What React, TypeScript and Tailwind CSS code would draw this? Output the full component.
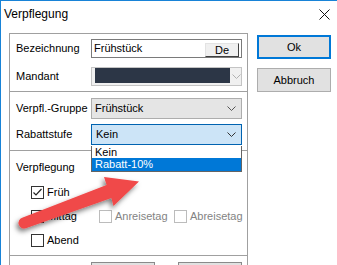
import React from 'react';

const Chevron = ({ color = '#555' }: { color?: string }) => (
  <svg width="9" height="5" viewBox="0 0 9 5" className="shrink-0">
    <path d="M0.5 0.5 L4.5 4.5 L8.5 0.5" fill="none" stroke={color} strokeWidth="1" />
  </svg>
);

function Checkbox({ label, checked = false, disabled = false }: { label: string; checked?: boolean; disabled?: boolean }) {
  return (
    <div className="flex items-center h-[13px] gap-[3px]">
      <div
        className={`w-[13px] h-[13px] shrink-0 bg-white border ${disabled ? 'border-[#bcbcbc]' : 'border-[#333333]'} flex items-center justify-center`}
      >
        {checked && (
          <svg width="11" height="11" viewBox="0 0 11 11">
            <path d="M1.5 5.5 L4 8 L9.5 2" fill="none" stroke="#222" strokeWidth="1.2" />
          </svg>
        )}
      </div>
      <span className={`leading-none ${disabled ? 'text-[#838383]' : 'text-black'}`}>{label}</span>
    </div>
  );
}

export default function App() {
  return (
    <div className="relative w-[337px] h-[265px] overflow-hidden bg-white border-l border-t border-[#1883d7] text-[11px] text-black font-[Liberation_Sans,Arial,sans-serif]">
      {/* Title bar */}
      <div className="h-[26px] flex items-center justify-between pl-[3px] pr-[7px]">
        <span className="text-[12px]">Verpflegung</span>
        <svg width="11" height="11" viewBox="0 0 11 11">
          <path d="M0.5 0.5 L10.5 10.5 M10.5 0.5 L0.5 10.5" stroke="#111" strokeWidth="1" />
        </svg>
      </div>

      <div className="flex pt-[6px]">
        {/* Left group column */}
        <div className="ml-[8px] w-[239px] border-x border-[#a0a0a0] flex flex-col">
          {/* Bezeichnung / Mandant */}
          <div className="h-[58px] border-t border-[#a0a0a0] pt-[5px]">
            <div className="flex items-center h-[19px]">
              <span className="w-[81px] pl-[6px]">Bezeichnung</span>
              <div className="w-[151px] h-[19px] border border-[#7a7a7a] bg-white flex items-end justify-between">
                <span className="pl-[2px] self-center">Frühstück</span>
                <div className="w-[34px] h-[14px] mr-[2px] bg-[#f0f0f0] border-t border-l border-[#e3e3e3] border-r border-b border-r-[#404040] border-b-[#404040] flex items-center justify-center">
                  De
                </div>
              </div>
            </div>
            <div className="flex items-center h-[19px] mt-[9px]">
              <span className="w-[81px] pl-[6px]">Mandant</span>
              <div className="w-[151px] h-[19px] border border-[#c4c4c4] bg-[#f0f0f0] flex items-start">
                <div className="ml-[3px] w-[137px] h-[15px] bg-[#2c3646]" />
                <div className="ml-[2px] self-center opacity-40">
                  <Chevron />
                </div>
              </div>
            </div>
          </div>

          {/* Verpfl.-Gruppe / Rabattstufe */}
          <div className="h-[59px] border-t border-[#a0a0a0] pt-[6px]">
            <div className="flex items-center h-[21px]">
              <span className="w-[81px] pl-[6px]">Verpfl.-Gruppe</span>
              <div className="w-[151px] h-[21px] border border-[#adadad] bg-[#e5e5e5] flex items-center justify-between pl-[3px] pr-[5px]">
                <span>Frühstück</span>
                <Chevron />
              </div>
            </div>
            <div className="flex items-center h-[21px] mt-[5px]">
              <span className="w-[81px] pl-[6px]">Rabattstufe</span>
              <div className="w-[151px] h-[21px] border border-[#0063b1] bg-[#cce4f7] flex items-center justify-between pl-[4px] pr-[5px]">
                <span>Kein</span>
                <Chevron color="#333" />
              </div>
            </div>
          </div>

          {/* Verpflegung */}
          <div className="h-[105px] border-t border-[#a0a0a0] pt-[8px]">
            <div className="h-[16px] flex items-center pl-[6px]">Verpflegung</div>
            <div className="flex flex-col gap-[11px] mt-[11px] pl-[21px]">
              <Checkbox label="Früh" checked />
              <div className="flex">
                <div className="w-[68px]">
                  <Checkbox label="Mittag" />
                </div>
                <div className="w-[75px]">
                  <Checkbox label="Anreisetag" disabled />
                </div>
                <Checkbox label="Abreisetag" disabled />
              </div>
              <Checkbox label="Abend" />
            </div>
          </div>

          {/* Bottom buttons */}
          <div className="h-[20px] border-t border-[#a0a0a0] pt-[6px] flex">
            <div className="ml-[81px] w-[64px] h-[22px] border border-[#8a8a8a] bg-[#e1e1e1]" />
            <div className="ml-[23px] w-[64px] h-[22px] border border-[#8a8a8a] bg-[#e1e1e1]" />
          </div>
        </div>

        {/* Right buttons */}
        <div className="ml-[9px] w-[74px] pt-[2px] flex flex-col">
          <div className="h-[24px] border-2 border-[#0078d7] bg-[#e1e1e1] flex items-center justify-center">Ok</div>
          <div className="h-[24px] mt-[9px] border border-[#adadad] bg-[#e1e1e1] flex items-center justify-center">
            Abbruch
          </div>
        </div>
      </div>

      {/* Open dropdown list */}
      <div className="absolute left-[90px] top-[145px] w-[151px] bg-white border-x border-b border-[#646464] flex flex-col">
        <div className="h-[12px] flex items-center pl-[3px]">Kein</div>
        <div className="h-[13px] flex items-center pl-[3px] bg-[#0078d7] text-white">Rabatt-10%</div>
      </div>

      {/* Red annotation arrow */}
      <svg className="absolute left-[-1px] top-[-1px] pointer-events-none" width="337" height="265" viewBox="0 0 337 265">
        <defs>
          <filter id="sh" x="-20%" y="-50%" width="140%" height="200%">
            <feDropShadow dx="-2" dy="3" stdDeviation="2.5" floodColor="#000" floodOpacity="0.5" />
          </filter>
        </defs>
        <path
          d="M22.2 217.8 L106.6 184.9 L104 177 L139 181.5 L113.5 206 L111.4 198.1 L25.8 228.2 A5.5 5.5 0 0 1 22.2 217.8 Z"
          fill="#f04848"
          filter="url(#sh)"
        />
      </svg>
    </div>
  );
}
